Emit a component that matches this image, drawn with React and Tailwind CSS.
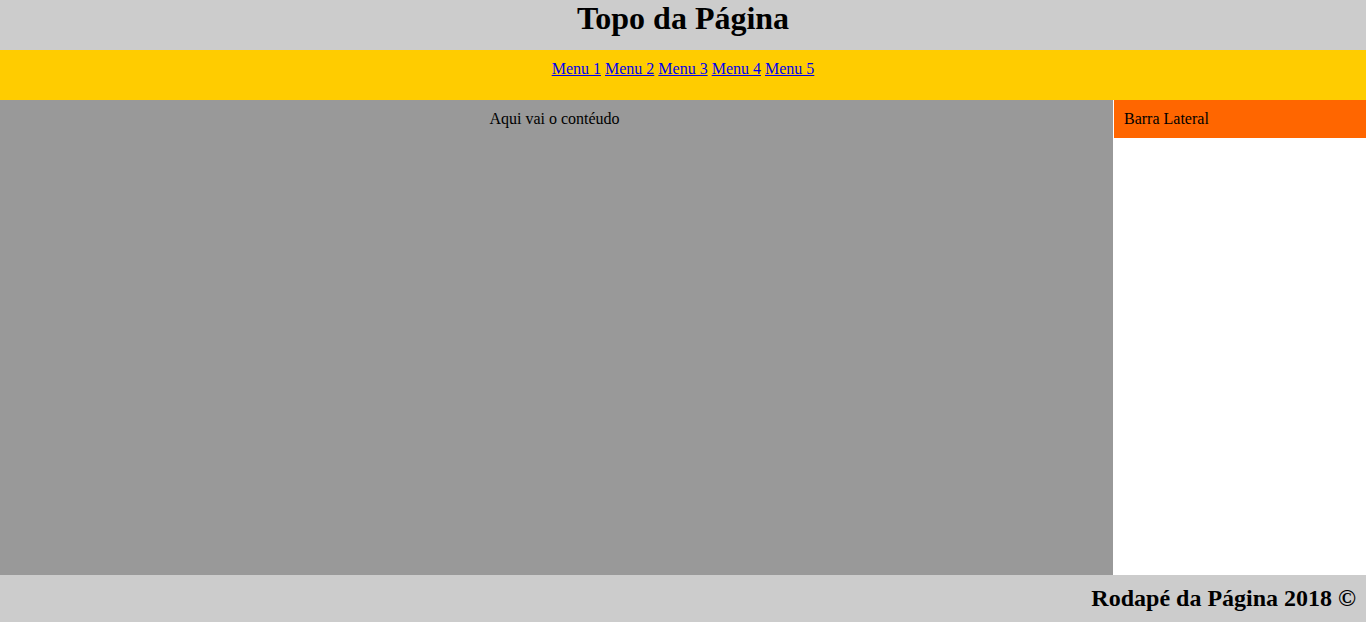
export default function App() {
  const menus = ['Menu 1', 'Menu 2', 'Menu 3', 'Menu 4', 'Menu 5']
  return (
    <div className="w-[1366px] h-[622px] flex flex-col bg-white text-black font-['Liberation_Serif','Times_New_Roman',serif]">
      <header className="h-[50px] bg-[#cccccc] text-center">
        <h1 className="text-[32px] font-bold leading-[36px]">Topo da Página</h1>
      </header>
      <nav className="h-[50px] bg-[#ffcc00] pt-[10px] text-center text-[16px] leading-[18px]">
        {menus.map((m, i) => (
          <span key={m}>
            <a href="#" className="text-[#0000ee] underline">{m}</a>
            {i < menus.length - 1 ? ' ' : ''}
          </span>
        ))}
      </nav>
      <main className="flex h-[475px]">
        <section className="w-[1113px] bg-[#999999] pt-[10px] pr-[4px] text-center text-[16px] leading-[18px]">
          Aqui vai o contéudo
        </section>
        <aside className="flex-1 bg-white pl-px">
          <div className="h-[38px] bg-[#ff6600] px-[10px] pt-[10px] text-[16px] leading-[18px]">Barra Lateral</div>
        </aside>
      </main>
      <footer className="h-[47px] bg-[#cccccc] pt-[10px] pr-[10px] text-right">
        <h2 className="text-[24px] font-bold leading-[27px]">Rodapé da Página 2018 ©</h2>
      </footer>
    </div>
  )
}
